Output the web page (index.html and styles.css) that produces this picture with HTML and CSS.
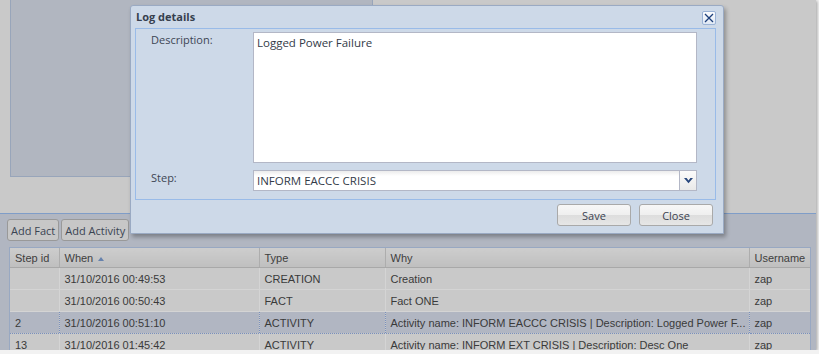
FILE: index.html
```html
<!DOCTYPE html>
<html lang="en">
<head>
    <meta charset="UTF-8">
    <title>Log details</title>
    <link rel="stylesheet" href="styles.css">
</head>
<body>

    <div class="app">
        <div class="top">
            <div class="side-panel"></div>
        </div>

        <div class="bottom">
            <div class="toolbar">
                <button class="tb-btn">Add Fact</button>
                <button class="tb-btn">Add Activity</button>
            </div>

            <div class="grid">
                <table>
                    <colgroup>
                        <col class="c-step">
                        <col class="c-when">
                        <col class="c-type">
                        <col class="c-why">
                        <col class="c-user">
                    </colgroup>
                    <thead>
                        <tr>
                            <th>Step id</th>
                            <th>When <span class="sort"></span></th>
                            <th>Type</th>
                            <th>Why</th>
                            <th>Username</th>
                        </tr>
                    </thead>
                    <tbody>
                        <tr>
                            <td></td>
                            <td>31/10/2016 00:49:53</td>
                            <td>CREATION</td>
                            <td>Creation</td>
                            <td>zap</td>
                        </tr>
                        <tr>
                            <td></td>
                            <td>31/10/2016 00:50:43</td>
                            <td>FACT</td>
                            <td>Fact ONE</td>
                            <td>zap</td>
                        </tr>
                        <tr class="selected">
                            <td>2</td>
                            <td>31/10/2016 00:51:10</td>
                            <td>ACTIVITY</td>
                            <td>Activity name: INFORM EACCC CRISIS | Description: Logged Power F...</td>
                            <td>zap</td>
                        </tr>
                        <tr>
                            <td>13</td>
                            <td>31/10/2016 01:45:42</td>
                            <td>ACTIVITY</td>
                            <td>Activity name: INFORM EXT CRISIS | Description: Desc One</td>
                            <td>zap</td>
                        </tr>
                    </tbody>
                </table>
            </div>
        </div>

        <!-- modal window -->
        <div class="dialog">
            <div class="dialog-header">
                <span class="dialog-title">Log details</span>
                <span class="close-x">
                    <svg width="10" height="10" viewBox="0 0 10 10">
                        <path d="M1 1 L9 9 M9 1 L1 9" stroke="#1d3f7a" stroke-width="1.3" fill="none"/>
                    </svg>
                </span>
            </div>

            <div class="dialog-body">
                <div class="form-row">
                    <label class="form-label">Description:</label>
                    <textarea class="description" readonly>Logged Power Failure</textarea>
                </div>
                <div class="form-row step-row">
                    <label class="form-label">Step:</label>
                    <div class="combo">
                        <input type="text" value="INFORM EACCC CRISIS" readonly>
                        <span class="trigger">
                            <svg width="9" height="6" viewBox="0 0 9 6">
                                <polygon points="0,0 2.6,0 4.5,2.4 6.4,0 9,0 4.5,5.2" fill="#27467c"/>
                            </svg>
                        </span>
                    </div>
                </div>
            </div>

            <div class="dialog-buttons">
                <button class="dlg-btn">Save</button>
                <button class="dlg-btn">Close</button>
            </div>
        </div>
    </div>

</body>
</html>
```

FILE: styles.css
```css
html, body {
    margin: 0;
    padding: 0;
}

body {
    background: #f2f2f2;
    font-family: "Open Sans", "DejaVu Sans", sans-serif;
}

.app {
    position: relative;
    width: 816px;
    height: 350px;
    background: #c9c9c9;
    display: flex;
    flex-direction: column;
    overflow: hidden;
    box-shadow: 1px 1px 3px rgba(0, 0, 0, 0.35);
}

/* upper area behind the mask */
.top {
    height: 213px;
    flex-shrink: 0;
    display: flex;
}

.side-panel {
    margin-left: 10px;
    width: 361px;
    height: 176px;
    background: #b1b6c0;
    border: 1px solid #98a5ba;
    border-top: none;
}

/* lower area: toolbar + grid */
.bottom {
    flex: 1;
    min-height: 0;
    overflow: hidden;
    background: #b1b6c1;
    border-top: 1px solid #7f9dc8;
    padding: 5px 0 0 7px;
}

.toolbar {
    display: flex;
    gap: 2px;
    height: 22px;
}

.tb-btn {
    height: 22px;
    padding: 0 3px;
    margin: 0;
    background: #c7c7c7;
    border: 1px solid #999;
    border-radius: 3px;
    font-family: "Open Sans", sans-serif;
    font-size: 11px;
    color: #3a4452;
}

.grid {
    margin: 6px 0 0 2px;
    width: 800px;
    border: 1px solid #98a8c2;
    border-bottom: none;
    background: #c9c9c9;
}

table {
    width: 100%;
    border-collapse: collapse;
    table-layout: fixed;
    font-family: "Liberation Sans", Arial, sans-serif;
    font-size: 11px;
    color: #3a3a3a;
}

.c-step { width: 49px; }
.c-when { width: 200px; }
.c-type { width: 126px; }
.c-why { width: 364px; }
.c-user { width: 61px; }

th {
    height: 19px;
    padding: 0 5px;
    text-align: left;
    font-weight: normal;
    color: #3e3e3e;
    background: linear-gradient(#cdcdcd, #bfbfbf);
    border-right: 1px solid #adadad;
    border-bottom: 1px solid #a8a8a8;
}

th:last-child {
    border-right: none;
}

.sort {
    display: inline-block;
    width: 0;
    height: 0;
    margin-left: 2px;
    vertical-align: 1px;
    border-left: 3.5px solid transparent;
    border-right: 3.5px solid transparent;
    border-bottom: 4px solid #6682ad;
}

td {
    height: 21px;
    padding: 0 5px;
    white-space: nowrap;
    overflow: hidden;
    border-right: 1px solid #d4d4d4;
    border-bottom: 1px solid #d4d4d4;
}

td:last-child {
    border-right: none;
}

tr.selected td {
    background: #b1b6c2;
    border-top: 1px dotted #7990bd;
    border-bottom: 1px dotted #7990bd;
    border-right: 1px dotted #7990bd;
}

tr.selected td:last-child {
    border-right: none;
}

/* modal window */
.dialog {
    position: absolute;
    left: 130px;
    top: 5px;
    width: 594px;
    height: 229px;
    box-sizing: border-box;
    background: #cdd9e8;
    border: 1px solid #9aaac3;
    border-radius: 3px 3px 0 0;
    box-shadow: 2px 3px 4px rgba(0, 0, 0, 0.3);
    display: flex;
    flex-direction: column;
}

.dialog-header {
    height: 22px;
    display: flex;
    align-items: center;
    justify-content: space-between;
    padding: 0 7px 0 5px;
}

.dialog-title {
    font-weight: bold;
    font-size: 11px;
    color: #363f4e;
    margin-top: -1px;
}

.close-x {
    width: 12px;
    height: 12px;
    display: flex;
    align-items: center;
    justify-content: center;
    margin-top: 2px;
    background: linear-gradient(#fbfcfe, #dfe8f4);
    border: 1px solid #9bb3d6;
    border-radius: 2px;
}

.dialog-body {
    margin: 0 7px 0 4px;
    border: 1px solid #99bbe8;
    padding-top: 3px;
    box-sizing: border-box;
    height: 172px;
}

.form-row {
    display: flex;
}

.step-row {
    margin-top: 7px;
}

.form-label {
    width: 102px;
    padding-left: 15px;
    line-height: 15px;
    font-size: 11px;
    color: #3d4654;
}

.description {
    width: 444px;
    height: 131px;
    box-sizing: border-box;
    margin: 0;
    padding: 2px 3px;
    border: 1px solid #b3b7c6;
    background: #fff;
    resize: none;
    overflow: hidden;
    font-family: "Open Sans", sans-serif;
    font-size: 11.5px;
    line-height: 15px;
    color: #333b48;
    outline: none;
}

.combo {
    width: 444px;
    height: 21px;
    box-sizing: border-box;
    display: flex;
    border: 1px solid #b3b7c6;
    background: linear-gradient(#ececec, #fff 5px);
}

.combo input {
    flex: 1;
    min-width: 0;
    border: none;
    margin: 0;
    padding: 0 3px;
    background: transparent;
    font-family: "Open Sans", sans-serif;
    font-size: 11.5px;
    color: #333b48;
    outline: none;
}

.trigger {
    width: 16px;
    border-left: 1px solid #b3b7c6;
    background: linear-gradient(#fbfbfb, #e9e9e9);
    display: flex;
    align-items: center;
    justify-content: center;
}

.dialog-buttons {
    display: flex;
    justify-content: flex-end;
    gap: 8px;
    margin: 4px 10px 0 0;
}

.dlg-btn {
    width: 74px;
    height: 22px;
    margin: 0;
    padding: 0;
    border: 1px solid #a9a9a9;
    border-radius: 3px;
    background: linear-gradient(#f7f7f7 0%, #efefef 50%, #dddddd 50%, #e6e6e6 100%);
    font-family: "Open Sans", sans-serif;
    font-size: 11px;
    color: #3b4250;
}
```
